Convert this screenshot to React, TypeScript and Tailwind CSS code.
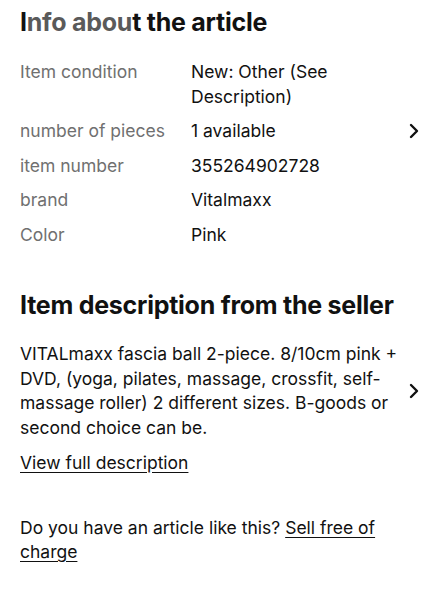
import React from "react";

function Chevron() {
  return (
    <svg width="12" height="16" viewBox="0 0 12 16" fill="none" className="shrink-0">
      <path d="M3 2 L9 8 L3 14" stroke="#111" strokeWidth="2.4" strokeLinecap="round" strokeLinejoin="round" />
    </svg>
  );
}

const rows: { label: string; value: string; chevron?: boolean }[] = [
  { label: "Item condition", value: "New: Other (See Description)" },
  { label: "number of pieces", value: "1 available", chevron: true },
  { label: "item number", value: "355264902728" },
  { label: "brand", value: "Vitalmaxx" },
  { label: "Color", value: "Pink" },
];

export default function App() {
  return (
    <div
      className="w-[439px] h-[600px] bg-white overflow-hidden pl-[20px] pr-[19px] pt-[6px]"
      style={{ fontFamily: "Inter, 'Open Sans', sans-serif" }}
    >
      <h2 className="text-[25px] leading-[32px] font-bold text-[#111] tracking-[-0.25px]">
        I<span className="text-[#5a5a5a]">nfo abou</span>t the article
      </h2>
      <div className="mt-[22px] flex flex-col gap-[10px] text-[17.5px] leading-[24.5px]">
        {rows.map((r) => (
          <div key={r.label} className="flex items-center">
            <div className="w-[171px] shrink-0 text-[#707070] self-start">{r.label}</div>
            <div className="w-[150px] text-[#111]">{r.value}</div>
            <div className="flex-1 flex justify-end">{r.chevron ? <Chevron /> : null}</div>
          </div>
        ))}
      </div>
      <h2 className="mt-[42px] text-[25px] leading-[32px] font-bold text-[#111] tracking-[-0.25px]">
        Item description from the seller
      </h2>
      <div className="mt-[21px] flex items-center">
        <p className="w-[380px] text-[17.5px] leading-[24.5px] text-[#111]">
          VITALmaxx fascia ball 2-piece. 8/10cm pink + DVD, (yoga, pilates, massage, crossfit, self-massage roller) 2 different sizes. B-goods or second choice can be.
        </p>
        <div className="flex-1 flex justify-end">
          <Chevron />
        </div>
      </div>
      <a className="mt-[11px] block text-[17.5px] leading-[24.5px] text-[#111] underline underline-offset-[3px]">
        View full description
      </a>
      <p className="mt-[40px] text-[17.5px] leading-[24.5px] text-[#111] w-[370px]">
        Do you have an article like this? <span className="underline underline-offset-[3px]">Sell free of charge</span>
      </p>
    </div>
  );
}
